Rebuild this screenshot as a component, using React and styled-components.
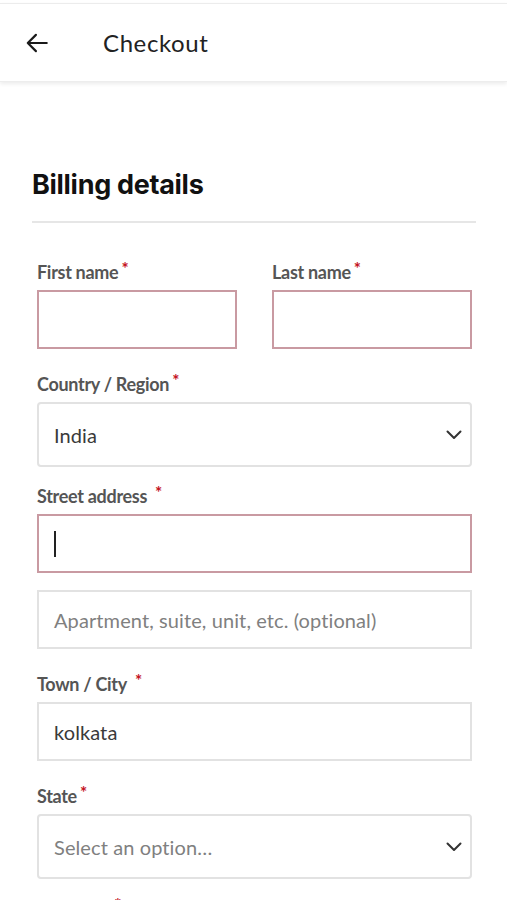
import styled, { createGlobalStyle } from 'styled-components';

const GlobalStyle = createGlobalStyle`
  body {
    margin: 0;
    background: #ffffff;
    font-family: 'Lato', 'Liberation Sans', sans-serif;
  }
`;

// gap = space above the group, in px
const fields = [
  { label: 'Country / Region', kind: 'select', value: 'India', gap: 23 },
  { label: 'Street address', spaced: true, kind: 'input', invalid: true, caret: true, gap: 17 },
  { kind: 'input', placeholder: 'Apartment, suite, unit, etc. (optional)', gap: 17 },
  { label: 'Town / City', spaced: true, kind: 'input', value: 'kolkata', gap: 23 },
  { label: 'State', kind: 'select', placeholder: 'Select an option…', gap: 23 },
];

const Chevron = () => (
  <svg width="16" height="10" viewBox="0 0 16 10" fill="none">
    <polyline points="1.5,1.5 8,8 14.5,1.5" stroke="#333" strokeWidth="2" strokeLinecap="round" strokeLinejoin="round" />
  </svg>
);

const BackArrow = () => (
  <svg width="26" height="26" viewBox="0 0 24 24" fill="none">
    <path d="M21 12H3.5M11 4.5L3.5 12l7.5 7.5" stroke="#1a1a1a" strokeWidth="2" strokeLinecap="round" strokeLinejoin="round" />
  </svg>
);

const Label = ({ text, spaced }) => (
  <FieldLabel>
    {text}
    <Required $spaced={spaced}>*</Required>
  </FieldLabel>
);

const App = () => {
  return (
    <>
      <GlobalStyle />
      <Header>
        <BackButton>
          <BackArrow />
        </BackButton>
        <Title>Checkout</Title>
      </Header>
      <Content>
        <Heading>Billing details</Heading>
        <Form>
          <Row>
            <Group>
              <Label text="First name" />
              <Box $invalid />
            </Group>
            <Group>
              <Label text="Last name" />
              <Box $invalid />
            </Group>
          </Row>
          {fields.map((f, i) => (
            <Group key={i} $gap={f.gap}>
              {f.label && <Label text={f.label} spaced={f.spaced} />}
              <Box $invalid={f.invalid} $select={f.kind === 'select'}>
                {f.caret && <Caret />}
                {f.value && <Value>{f.value}</Value>}
                {f.placeholder && <Placeholder>{f.placeholder}</Placeholder>}
                {f.kind === 'select' && <Chevron />}
              </Box>
            </Group>
          ))}
          <Group $gap={17}>
            <Label text="PIN Code" />
          </Group>
        </Form>
      </Content>
    </>
  );
};

const Header = styled.header`
  display: flex;
  align-items: center;
  height: 77px;
  margin-top: 3px;
  border-top: 1px solid #ececec;
  background: #fff;
  box-shadow: 0 2px 4px rgba(0, 0, 0, 0.08);
  border-bottom: 1px solid #ededed;
`;

const BackButton = styled.div`
  display: flex;
  align-items: center;
  justify-content: center;
  width: 26px;
  margin-left: 24px;
  margin-right: 53px;
`;

const Title = styled.h1`
  margin: 0;
  font-family: 'Lato', sans-serif;
  font-size: 24px;
  font-weight: 400;
  color: #222;
  letter-spacing: 0.6px;
`;

const Content = styled.main`
  padding: 86px 31px 0 32px;
`;

const Heading = styled.h2`
  margin: 0;
  padding-bottom: 19px;
  border-bottom: 2px solid #e6e6e6;
  font-family: 'Inter', 'Liberation Sans', sans-serif;
  font-size: 27px;
  font-weight: 700;
  line-height: 34px;
  color: #111;
  letter-spacing: -0.3px;
`;

const Form = styled.div`
  display: flex;
  flex-direction: column;
  padding: 37px 4px 0 5px;
`;

const Row = styled.div`
  display: grid;
  grid-template-columns: 1fr 1fr;
  column-gap: 35px;
`;

const Group = styled.div`
  display: flex;
  flex-direction: column;
  margin-top: ${(p) => p.$gap || 0}px;
`;

const FieldLabel = styled.label`
  display: flex;
  align-items: flex-start;
  height: 24px;
  margin-bottom: 6px;
  font-size: 18px;
  font-weight: 700;
  color: #555;
  line-height: 24px;
  letter-spacing: -0.3px;
`;

const Required = styled.span`
  color: #c4121d;
  font-size: 17px;
  font-weight: 700;
  line-height: 17px;
  margin-left: ${(p) => (p.$spaced ? '8px' : '3px')};
`;

const Box = styled.div`
  box-sizing: border-box;
  display: flex;
  align-items: center;
  justify-content: space-between;
  height: ${(p) => (p.$select ? '65px' : '59px')};
  padding: 0 8px 0 15px;
  border: ${(p) => (p.$invalid ? '2px solid #c99aa2' : '2px solid #e2e2e2')};
  border-radius: ${(p) => (p.$select ? '4px' : '0')};
  background: #fff;
  font-size: 20px;
  letter-spacing: 0.1px;
`;

const Value = styled.span`
  color: #3a3a3a;
`;

const Placeholder = styled.span`
  color: #808080;
  flex: 1;
`;

const Caret = styled.span`
  width: 2px;
  height: 26px;
  background: #222;
`;

export default App;
